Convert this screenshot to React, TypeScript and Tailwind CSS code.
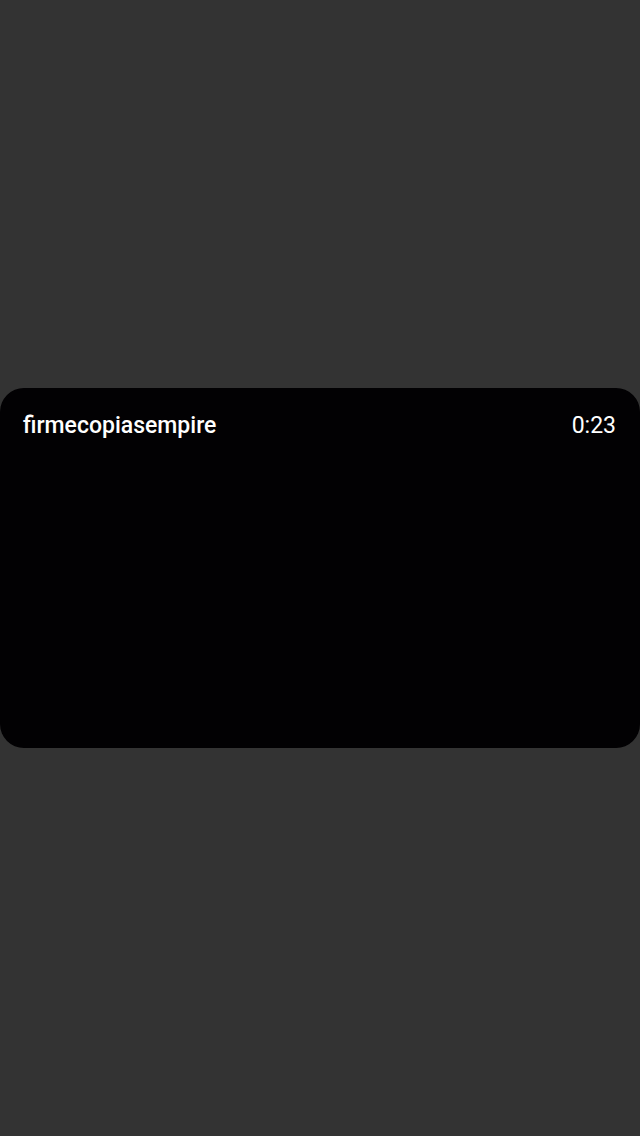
export default function App() {
  return (
    <div className="flex min-h-screen w-full items-center bg-[#333333]" style={{ fontFamily: 'Roboto, "Liberation Sans", sans-serif' }}>
      <div className="flex h-[360px] w-full flex-col rounded-[24px] bg-[#020103]">
        <div className="flex items-center justify-between pl-[23px] pr-6 pt-[23px]">
          <span className="text-[23px] font-medium leading-[30px] text-white">firmecopiasempire</span>
          <span className="text-[23px] leading-[30px] text-white">0:23</span>
        </div>
      </div>
    </div>
  );
}
